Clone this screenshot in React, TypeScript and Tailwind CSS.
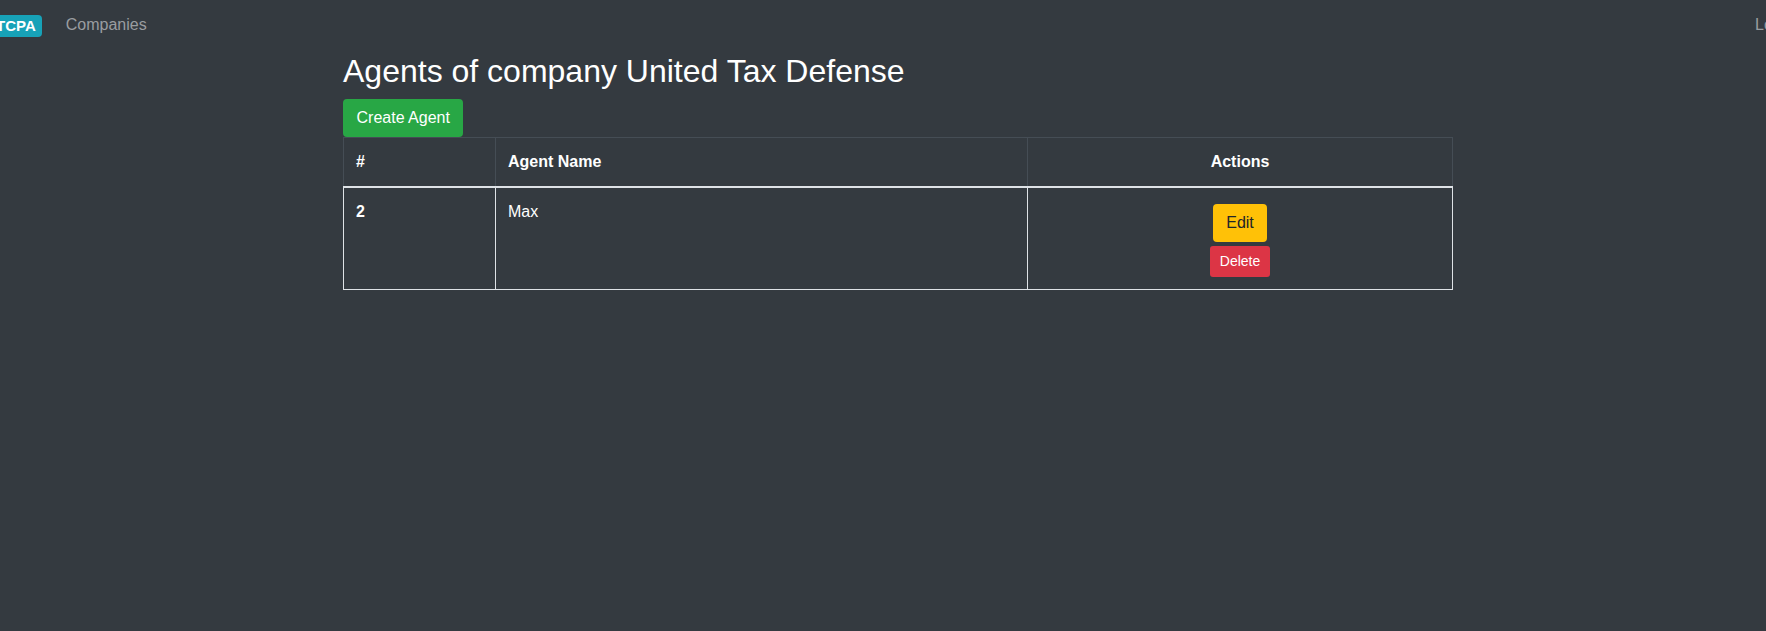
export default function App() {
  return (
    <div
      className="min-h-[631px] w-full overflow-hidden bg-[#343a40] text-white"
      style={{ fontFamily: '"Liberation Sans", Arial, sans-serif' }}
    >
      <nav className="flex h-[52px] items-center justify-between">
        <div className="flex items-center -ml-[10px]">
          <span className="rounded-[4px] bg-[#17a2b8] px-[6px] pb-[4px] pt-[3px] text-[15px] font-bold leading-[15px] text-white">
            TCPA
          </span>
          <span className="ml-[24px] -mt-[2px] text-[16px] leading-[24px] text-[#9a9da0]">Companies</span>
        </div>
        <span className="-mt-[2px] mr-[-38px] text-[16px] leading-[24px] text-[#9a9da0]">Logout</span>
      </nav>
      <main className="ml-[343px] w-[1110px]">
        <h2 className="mb-[9px] text-[32px] font-normal leading-[38.4px]">Agents of company United Tax Defense</h2>
        <button className="h-[38px] rounded-[4px] bg-[#28a745] px-[13.5px] text-[16px] leading-[24px] text-white">
          Create Agent
        </button>
        <table className="w-full border-collapse text-left text-[16px] leading-[24px]">
          <thead>
            <tr>
              <th className="w-[152px] border border-b-2 border-[#454d55] border-b-[#dee2e6] p-[12px] font-bold">#</th>
              <th className="w-[532px] border border-b-2 border-[#454d55] border-b-[#dee2e6] p-[12px] font-bold">Agent Name</th>
              <th className="border border-b-2 border-[#454d55] border-b-[#dee2e6] p-[12px] text-center font-bold">Actions</th>
            </tr>
          </thead>
          <tbody>
            <tr>
              <td className="border border-[#dee2e6] p-[12px] align-top font-bold">2</td>
              <td className="border border-[#dee2e6] p-[12px] align-top">Max</td>
              <td className="border border-[#dee2e6] p-[12px] align-top">
                <div className="flex flex-col items-center gap-[4px] pt-[4px]">
                  <button className="h-[38px] rounded-[4px] bg-[#ffc107] px-[13px] text-[16px] leading-[24px] text-[#212529]">
                    Edit
                  </button>
                  <button className="h-[31px] rounded-[3px] bg-[#dc3545] px-[9.5px] text-[14px] leading-[21px] text-white">
                    Delete
                  </button>
                </div>
              </td>
            </tr>
          </tbody>
        </table>
      </main>
    </div>
  );
}
